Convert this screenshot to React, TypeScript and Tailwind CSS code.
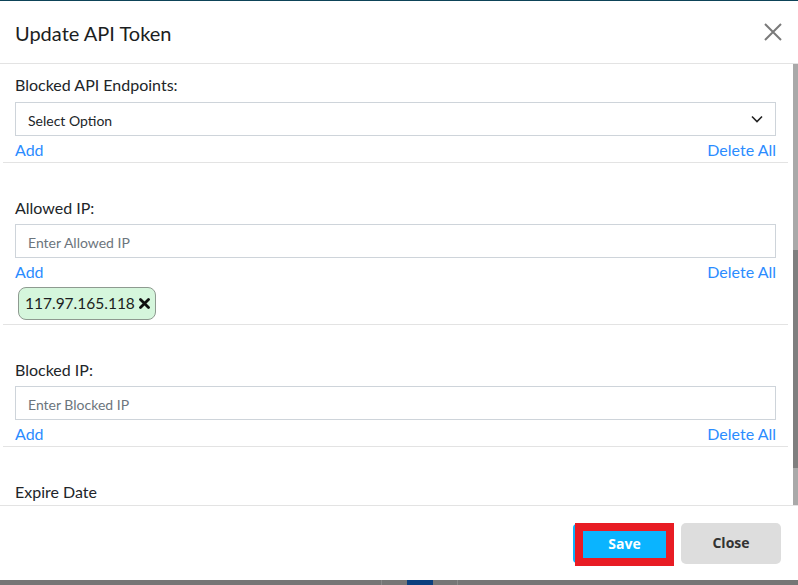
import React from "react";

const Section = ({
  label,
  children,
  first,
}: {
  label: string;
  children?: React.ReactNode;
  first?: boolean;
}) => (
  <div className={`border-b border-[#e3e3e3] px-[12px] ${first ? "pt-[10px]" : "pt-[34px]"}`}>
    <div className="text-[16px] leading-[22px] text-[#212529]">{label}</div>
    {children}
  </div>
);

const Links = () => (
  <div className="mt-[4px] flex h-[20px] items-center justify-between text-[16px] leading-[20px] text-[#2b8cff]">
    <span>Add</span>
    <span>Delete All</span>
  </div>
);

const Input = ({ placeholder }: { placeholder: string }) => (
  <div className="mt-[5px] flex h-[34px] items-center border border-[#ced4da] px-[12px] pt-[2px] text-[14px] text-[#6c757d]">
    {placeholder}
  </div>
);

export default function App() {
  return (
    <div
      className="flex h-[585px] w-[798px] flex-col overflow-hidden bg-[#777]"
      style={{ fontFamily: "Lato, 'Liberation Sans', sans-serif" }}
    >
      <div className="h-px bg-[#0d4358]" />
      <div className="flex flex-1 flex-col bg-white">
        {/* header */}
        <div className="flex h-[63px] items-center justify-between border-b border-[#e3e3e3] pl-[15px] pr-[16px]">
          <div className="pt-[2px] text-[20px] text-[#1b1e21]">Update API Token</div>
          <svg width="18" height="18" viewBox="0 0 18 18" className="mb-[1px]">
            <path d="M1 1L17 17M17 1L1 17" stroke="#7a7a7a" strokeWidth="2" />
          </svg>
        </div>
        {/* body */}
        <div className="flex h-[441px]">
          <div className="w-[793px] overflow-hidden px-[3px]">
            <div className="w-[785px]">
              <Section label="Blocked API Endpoints:" first>
                <div className="mt-[6px] flex h-[34px] items-center justify-between border border-[#ced4da] pl-[12px] pr-[12px] text-[14px] text-[#212529]">
                  <span className="pt-[2px]">Select Option</span>
                  <svg width="12" height="8" viewBox="0 0 12 8">
                    <path d="M1 1.5L6 6.5L11 1.5" fill="none" stroke="#222" strokeWidth="1.6" />
                  </svg>
                </div>
                <Links />
                <div className="h-[2px]" />
              </Section>
              <Section label="Allowed IP:">
                <Input placeholder="Enter Allowed IP" />
                <Links />
                <div className="mt-[5px] mb-[4px] ml-[3px] flex h-[33px] w-[138px] items-center gap-[4px] rounded-[8px] border border-[#8e9a90] bg-[#d5f6dc] pl-[6px]">
                  <span className="text-[15.5px] text-[#1b1e21]">117.97.165.118</span>
                  <svg width="11" height="11" viewBox="0 0 11 11">
                    <path d="M1.5 1.5L9.5 9.5M9.5 1.5L1.5 9.5" stroke="#111" strokeWidth="2.8" strokeLinecap="round" />
                  </svg>
                </div>
              </Section>
              <Section label="Blocked IP:">
                <Input placeholder="Enter Blocked IP" />
                <Links />
                <div className="h-[2px]" />
              </Section>
              <div className="px-[12px] pt-[34px] text-[16px] leading-[22px] text-[#212529]">Expire Date</div>
            </div>
          </div>
          <div className="flex w-[5px] flex-col">
            <div className="h-[186px] bg-[#a9a9a9]" />
            <div className="h-[218px] bg-[#7f7f7f]" />
            <div className="flex-1 bg-[#a9a9a9]" />
          </div>
        </div>
        {/* footer */}
        <div
          className="flex flex-1 items-center justify-end gap-[7px] border-t border-[#e3e3e3] pr-[17px]"
          style={{ fontFamily: "'Open Sans', 'Liberation Sans', sans-serif" }}
        >
          <div className="relative h-[43px] w-[101px]">
            <div className="absolute left-0 top-[2px] h-[39px] w-[20px] rounded-l-[4px] bg-[#0ab4ff]" />
            <div className="absolute left-[2px] top-[1px] flex h-[43px] w-[99px] items-center justify-center border-[8px] border-[#e81c24] bg-[#0ab4ff] pb-[2px] text-[14px] font-bold text-white">
              Save
            </div>
          </div>
          <div className="flex h-[41px] w-[100px] items-center justify-center rounded-[5px] bg-[#dddddd] pb-[2px] text-[14px] font-bold text-[#333]">
            Close
          </div>
        </div>
      </div>
      <div className="flex h-[5px] bg-[#767676]">
        <div className="w-[382px] border-r border-[#8a8a8a]" />
        <div className="w-[25px]" />
        <div className="w-[26px] bg-[#0b3f7e]" />
        <div className="w-[25px] border-r border-[#8a8a8a]" />
      </div>
    </div>
  );
}
